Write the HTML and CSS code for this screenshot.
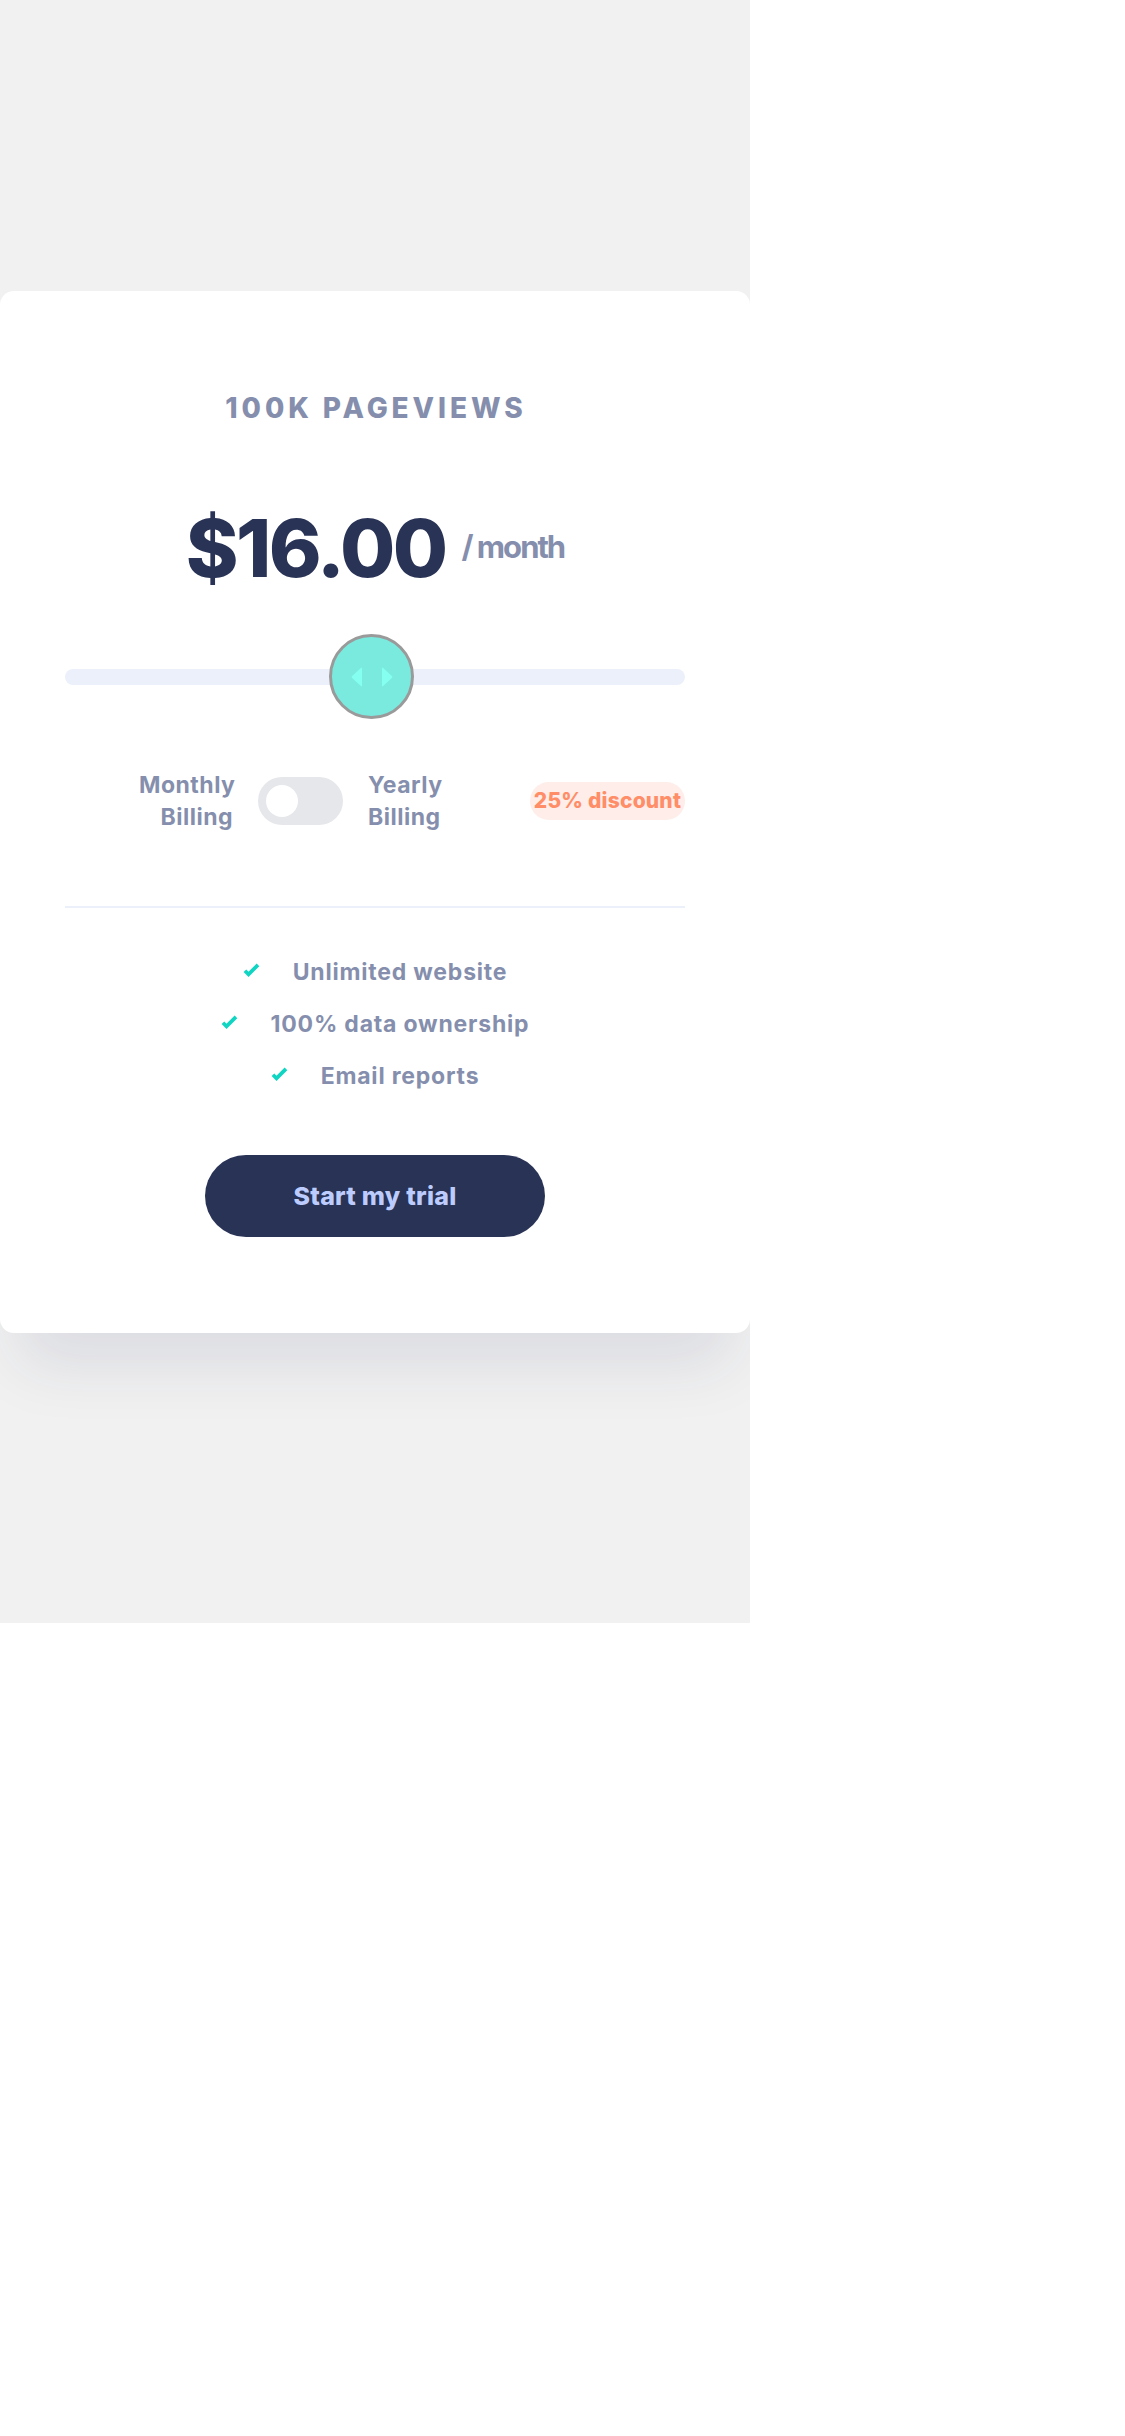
FILE: index.html
```html
<!DOCTYPE html>
<html lang="en">
<head>
<meta charset="utf-8">
<title>Interactive pricing component</title>
<link rel="stylesheet" href="styles.css">
</head>
<body>
<div class="page">
  <main class="card">
    <h1 class="views">100K Pageviews</h1>
    <div class="price-row">
      <span class="price">$16.00</span>
      <span class="per">/ month</span>
    </div>
    <div class="slider">
      <div class="track"></div>
      <div class="thumb">
        <svg width="42" height="20" viewBox="0 0 42 20">
          <path d="M11 1.5 L11 18.5 Q11 20 9.8 19 L1.2 11 Q0 10 1.2 9 L9.8 1 Q11 0 11 1.5 Z" fill="#84fff0"/>
          <path d="M31 1.5 L31 18.5 Q31 20 32.2 19 L40.8 11 Q42 10 40.8 9 L32.2 1 Q31 0 31 1.5 Z" fill="#84fff0"/>
        </svg>
      </div>
    </div>
    <div class="billing">
      <span class="label label-left">Monthly<br>Billing</span>
      <span class="toggle"><span class="knob"></span></span>
      <span class="label">Yearly<br>Billing</span>
      <span class="badge">25% discount</span>
    </div>
    <hr class="divider">
    <ul class="features">
      <li><svg class="check" width="17" height="15" viewBox="0 0 9 8"><path fill="none" stroke="#10d5c2" stroke-width="2" d="M1 4.134l1.907 1.908L7.949 1"/></svg><span>Unlimited website</span></li>
      <li><svg class="check" width="17" height="15" viewBox="0 0 9 8"><path fill="none" stroke="#10d5c2" stroke-width="2" d="M1 4.134l1.907 1.908L7.949 1"/></svg><span>100% data ownership</span></li>
      <li><svg class="check" width="17" height="15" viewBox="0 0 9 8"><path fill="none" stroke="#10d5c2" stroke-width="2" d="M1 4.134l1.907 1.908L7.949 1"/></svg><span>Email reports</span></li>
    </ul>
    <div class="cta-wrap">
      <button class="cta">Start my trial</button>
    </div>
  </main>
</div>
</body>
</html>
```
FILE: styles.css
```css
* { box-sizing: border-box; }
html, body { margin: 0; padding: 0; background: #ffffff; }
body { font-family: Inter, "Noto Sans", "Liberation Sans", sans-serif; }

.page {
  width: 750px;
  min-height: 1623px;
  background: #f1f1f1;
  padding-top: 291px;
  overflow: hidden;
}

.card {
  width: 750px;
  height: 1042px;
  background: #ffffff;
  border-radius: 14px;
  padding: 100px 65px 96px 65px;
  box-shadow: 0 50px 60px -20px rgba(35, 45, 100, 0.11);
  display: flex;
  flex-direction: column;
}

.views {
  margin: 0;
  font-size: 28px;
  line-height: 34px;
  font-weight: 800;
  letter-spacing: 3.9px;
  text-transform: uppercase;
  color: #858fad;
  text-align: center;
  padding-left: 2px;
}

.price-row {
  margin-top: 83px;
  height: 80px;
  display: flex;
  align-items: center;
  justify-content: center;
  gap: 16px;
}
.price {
  font-size: 80px;
  line-height: 80px;
  font-weight: 800;
  color: #293356;
  letter-spacing: -2.6px;
}
.per {
  font-size: 31px;
  line-height: 40px;
  font-weight: 700;
  color: #858fad;
  letter-spacing: -2px;
  margin-top: -2px;
}

.slider {
  margin-top: 46px;
  height: 85px;
  position: relative;
  display: flex;
  align-items: center;
  width: 100%;
}
.track {
  width: 100%;
  height: 16px;
  border-radius: 8px;
  background: #ecf0fb;
}
.thumb {
  position: absolute;
  left: 264px;
  top: 0;
  width: 85px;
  height: 85px;
  border-radius: 50%;
  background: #7aeadf;
  border: 3px solid #9a9a9a;
  display: flex;
  align-items: center;
  justify-content: center;
}

.billing {
  margin-top: 50px;
  width: 100%;
  height: 64px;
  display: flex;
  align-items: center;
  padding-left: 74px;
}
.label {
  font-size: 23px;
  line-height: 32px;
  font-weight: 700;
  color: #858fad;
  letter-spacing: 0.5px;
}
.label-left { text-align: right; width: 94px; }
.toggle {
  width: 85px;
  height: 48px;
  border-radius: 24px;
  background: #e6e7eb;
  margin: 0 25px;
  display: flex;
  align-items: center;
  padding-left: 8px;
  flex-shrink: 0;
}
.knob {
  width: 32px;
  height: 32px;
  border-radius: 50%;
  background: #ffffff;
}
.badge {
  margin-left: auto;
  height: 38px;
  width: 155px;
  text-align: center;
  border-radius: 19px;
  background: #feede8;
  color: #ff8d68;
  font-size: 21px;
  font-weight: 800;
  line-height: 38px;
  letter-spacing: 0.2px;
  white-space: nowrap;
}

.divider {
  margin: 73px 0 0 0;
  width: 100%;
  height: 2px;
  border: 0;
  background: #ecf0fb;
}

.features {
  list-style: none;
  margin: 38px 0 0 0;
  padding: 0;
  width: 100%;
  display: flex;
  flex-direction: column;
  align-items: center;
}
.features li {
  height: 52px;
  display: flex;
  align-items: center;
  gap: 33px;
  font-size: 23px;
  line-height: 52px;
  font-weight: 700;
  color: #858fad;
  letter-spacing: 0.8px;
}
.check { display: block; margin-top: -4px; }

.cta-wrap {
  margin-top: 53px;
  width: 100%;
  display: flex;
  justify-content: center;
}
.cta {
  width: 340px;
  height: 82px;
  border: 0;
  border-radius: 41px;
  background: #293356;
  color: #bdccff;
  font-family: Inter, "Noto Sans", "Liberation Sans", sans-serif;
  font-size: 25px;
  font-weight: 800;
  letter-spacing: 0.25px;
}
```
